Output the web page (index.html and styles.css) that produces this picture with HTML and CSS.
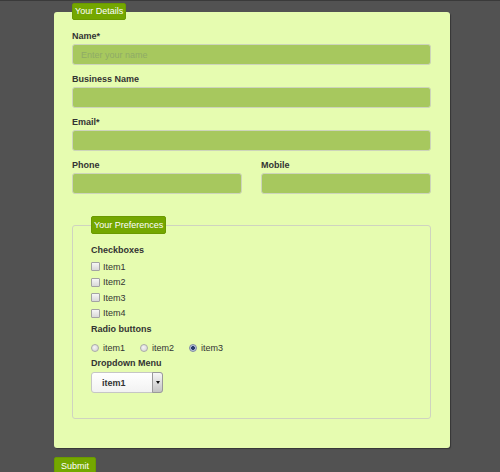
FILE: index.html
```html
<!DOCTYPE html>
<html>
<head>
<link rel="stylesheet" href="styles.css">
</head>
<body>

<form class="signup">
    <fieldset class="panel">
        <legend class="tag">Your Details</legend>

        <div class="field">
            <label class="label" for="name">Name*</label>
            <input class="text" id="name" type="text" placeholder="Enter your name">
        </div>
        <div class="field">
            <label class="label" for="business">Business Name</label>
            <input class="text" id="business" type="text">
        </div>
        <div class="field">
            <label class="label" for="email">Email*</label>
            <input class="text" id="email" type="text">
        </div>
        <div class="row">
            <div class="field">
                <label class="label" for="phone">Phone</label>
                <input class="text" id="phone" type="text">
            </div>
            <div class="field">
                <label class="label" for="mobile">Mobile</label>
                <input class="text" id="mobile" type="text">
            </div>
        </div>

        <fieldset class="prefs">
            <legend class="tag">Your Preferences</legend>

            <div class="group-title">Checkboxes</div>
            <div class="checks">
                <label class="check"><input type="checkbox"> Item1</label>
                <label class="check"><input type="checkbox"> Item2</label>
                <label class="check"><input type="checkbox"> Item3</label>
                <label class="check"><input type="checkbox"> Item4</label>
            </div>

            <div class="group-title spaced">Radio buttons</div>
            <div class="radios">
                <label class="radio"><input type="radio" name="choice"> item1</label>
                <label class="radio"><input type="radio" name="choice"> item2</label>
                <label class="radio"><input type="radio" name="choice" checked> item3</label>
            </div>

            <div class="group-title spaced">Dropdown Menu</div>
            <div class="select-box">
                <select>
                    <option>item1</option>
                    <option>item2</option>
                    <option>item3</option>
                </select>
                <span class="arrow"></span>
            </div>
        </fieldset>
    </fieldset>

    <button class="submit" type="button">Submit</button>
</form>

</body>
</html>
```

FILE: styles.css
```css
body {
    margin: 0;
    background: #525252;
    border-top: 1px solid #3a3a3a;
    font-family: "Liberation Sans", Arial, sans-serif;
    font-size: 9px;
    color: #333333;
}

.signup {
    padding: 2px 0 0 54px;
    width: 396px;
}

.panel {
    margin: 0;
    min-width: 0;
    width: 396px;
    box-sizing: border-box;
    padding: 10px 19px 29px 18px;
    border: 0;
    border-radius: 3px;
    background: #e6fcb0;
    box-shadow: 1px 1px 1px rgba(0, 0, 0, 0.35);
}

.tag {
    padding: 0 2px;
    line-height: 15px;
    background: #74a700;
    border: 1px solid #6a9a00;
    border-radius: 2px;
    color: #ffffff;
    font-size: 9px;
}

.field {
    margin-bottom: 8px;
}

.label {
    display: block;
    font-weight: bold;
    line-height: 12px;
    margin-bottom: 2px;
}

.text {
    display: block;
    width: 100%;
    height: 21px;
    box-sizing: border-box;
    margin: 0;
    padding: 0 8px;
    border: 1px solid #cdd4bb;
    border-radius: 3px;
    background: #a7c85e;
    font-family: inherit;
    font-size: 9px;
    color: #333333;
}

.text::placeholder {
    color: #8fab66;
}

.row {
    display: grid;
    grid-template-columns: 1fr 1fr;
    gap: 19px;
}

.prefs {
    margin: 14px 0 0;
    min-width: 0;
    padding: 10px 18px 25px;
    border: 1px solid #cfd3c0;
    border-radius: 3px;
}

.prefs .tag {
    line-height: 16px;
}

.group-title {
    font-weight: bold;
    line-height: 12px;
    margin-bottom: 2px;
}

.group-title.spaced {
    margin-top: 2px;
}

.checks {
    margin-top: 3px;
}

.check {
    display: flex;
    align-items: center;
    gap: 3px;
    height: 15.5px;
}

.check input {
    appearance: none;
    margin: 0;
    width: 9px;
    height: 9px;
    border: 1px solid #a3a3a3;
    border-radius: 1px;
    background: linear-gradient(#f6f6f6, #d9d9d9);
}

.radios {
    display: flex;
    gap: 15px;
    height: 15px;
    margin-top: 5px;
}

.radio {
    display: flex;
    align-items: center;
    gap: 4px;
}

.radio input {
    appearance: none;
    margin: 0;
    width: 8px;
    height: 8px;
    border: 1px solid #aaaaaa;
    border-radius: 50%;
    background: radial-gradient(circle at 40% 40%, #f4f4f4, #cfcfcf);
}

.radio input:checked {
    border-color: #7d8aa6;
    background: radial-gradient(circle, #2b3f6e 0 1.6px, #b9c4d9 2.2px);
}

.select-box {
    display: flex;
    width: 72px;
    height: 21px;
    box-sizing: border-box;
    margin-top: 3px;
    border: 1px solid #c6c6c6;
    border-radius: 3px;
    background: linear-gradient(#ffffff, #f2f2f2);
}

.select-box select {
    appearance: none;
    flex: 1;
    min-width: 0;
    margin: 0;
    padding: 0 0 0 10px;
    border: 0;
    background: transparent;
    font-family: inherit;
    font-size: 9px;
    font-weight: bold;
    color: #333333;
}

.arrow {
    display: flex;
    align-items: center;
    justify-content: center;
    width: 9px;
    border: 1px solid #9a9a9a;
    border-radius: 0 3px 3px 0;
    margin: -1px -1px -1px 0;
    background: linear-gradient(#f7f7f7, #c4c4c4);
}

.arrow::after {
    content: "";
    border-left: 2.5px solid transparent;
    border-right: 2.5px solid transparent;
    border-top: 3px solid #111111;
}

.submit {
    display: block;
    margin: 9px 0 0;
    height: 18px;
    padding: 0 6px;
    border: 1px solid #6a9a00;
    border-radius: 2px 2px 0 0;
    background: #74a700;
    color: #ffffff;
    font-family: inherit;
    font-size: 9px;
}
```
